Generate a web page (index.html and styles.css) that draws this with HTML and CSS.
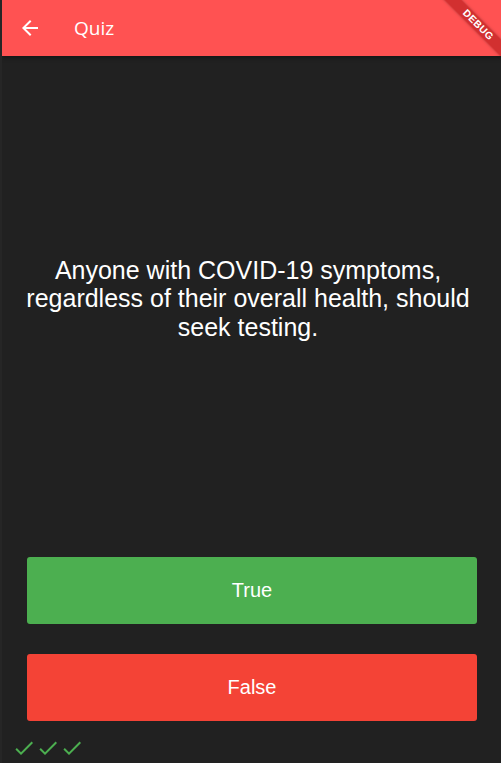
FILE: index.html
```html
<!DOCTYPE html>
<html>
<head>
<meta charset="utf-8">
<link rel="stylesheet" href="styles.css">
</head>
<body>
<div class="frame">
  <div class="edge"></div>
  <div class="app">
    <header class="appbar">
      <div class="leading">
        <svg width="24" height="24" viewBox="0 0 24 24"><path fill="#fff" d="M20 11H7.83l5.59-5.59L12 4l-8 8 8 8 1.41-1.41L7.83 13H20v-2z"/></svg>
      </div>
      <div class="title">Quiz</div>
    </header>
    <main class="body">
      <section class="question">
        <p class="qtext">Anyone with COVID-19 symptoms, regardless of their overall health, should seek testing.</p>
      </section>
      <div class="btnwrap"><button class="btn btn-true">True</button></div>
      <div class="btnwrap"><button class="btn btn-false">False</button></div>
      <div class="scores">
        <svg width="24" height="24" viewBox="0 0 24 24"><path fill="#4CAF50" d="M9 16.17L4.83 12l-1.42 1.41L9 19 21 7l-1.41-1.41z"/></svg>
        <svg width="24" height="24" viewBox="0 0 24 24"><path fill="#4CAF50" d="M9 16.17L4.83 12l-1.42 1.41L9 19 21 7l-1.41-1.41z"/></svg>
        <svg width="24" height="24" viewBox="0 0 24 24"><path fill="#4CAF50" d="M9 16.17L4.83 12l-1.42 1.41L9 19 21 7l-1.41-1.41z"/></svg>
      </div>
    </main>
    <div class="banner">DEBUG</div>
  </div>
</div>
</body>
</html>
```

FILE: styles.css
```css
html, body {
  margin: 0;
  padding: 0;
  background: #212121;
  overflow: hidden;
}
* { box-sizing: border-box; }
.frame {
  display: flex;
  width: 501px;
  height: 763px;
}
.edge {
  width: 2px;
  background: #262626;
  flex: none;
}
.app {
  position: relative;
  width: 499px;
  height: 763px;
  display: flex;
  flex-direction: column;
  overflow: hidden;
  background: #212121;
}
.appbar {
  height: 56px;
  flex: none;
  background: #FF5252;
  display: flex;
  align-items: center;
  box-shadow: 0 2px 4px rgba(0,0,0,0.35);
  position: relative;
  z-index: 1;
}
.leading {
  width: 56px;
  height: 56px;
  display: flex;
  align-items: center;
  justify-content: center;
}
.leading svg { display: block; }
.title {
  margin-left: 16px;
  color: #fff;
  font-family: "Open Sans", Roboto, sans-serif;
  font-weight: 400;
  font-size: 19px;
}
.body {
  flex: 1 1 0;
  min-height: 0;
  display: grid;
  grid-template-rows: 5fr 1fr 1fr 27px;
}
.question {
  display: flex;
  align-items: center;
  justify-content: center;
  padding: 10px 27px 10px 20px;
}
.qtext {
  margin: 0;
  text-align: center;
  color: #fff;
  font-family: "Liberation Sans", Arial, sans-serif;
  font-size: 25px;
  line-height: 1.15;
}
.btnwrap {
  display: flex;
  padding: 15px 24px 15px 25px;
}
.btn {
  flex: 1;
  border: none;
  border-radius: 3px;
  color: #fff;
  font-family: "Liberation Sans", Arial, sans-serif;
  font-size: 20px;
  padding: 0;
  margin: 0;
}
.btn-true { background: #4CAF50; }
.btn-false { background: #F44336; }
.scores {
  display: flex;
  align-items: flex-start;
  padding-left: 10px;
}
.scores svg { display: block; }
.banner {
  position: absolute;
  left: 416px;
  top: 19px;
  width: 120px;
  height: 12px;
  line-height: 12px;
  background: rgba(183, 28, 28, 0.63);
  color: #fff;
  font-family: "Liberation Sans", Arial, sans-serif;
  font-weight: bold;
  font-size: 10px;
  letter-spacing: 0.5px;
  text-align: center;
  transform: rotate(45deg);
  box-shadow: 0 0 3px rgba(0,0,0,0.3);
  z-index: 2;
}
```
